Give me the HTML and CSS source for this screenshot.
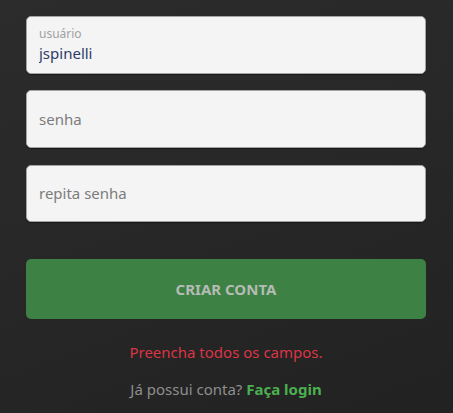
FILE: index.html
```html
<!DOCTYPE html>
<html lang="pt-BR">
<head>
<meta charset="utf-8">
<link rel="stylesheet" href="styles.css">
</head>
<body>
<main class="page">
  <form class="form">
    <div class="field filled">
      <label class="float-label" for="user">usuário</label>
      <input id="user" class="input" type="text" value="jspinelli">
    </div>
    <div class="field">
      <input class="input" type="password" placeholder="senha">
    </div>
    <div class="field">
      <input class="input" type="password" placeholder="repita senha">
    </div>
    <button type="button" class="btn">CRIAR CONTA</button>
    <p class="error">Preencha todos os campos.</p>
    <p class="switch">Já possui conta? <a class="link" href="#">Faça login</a></p>
  </form>
</main>
</body>
</html>
```
FILE: styles.css
```css
* { box-sizing: border-box; }
html, body { margin: 0; height: 100%; }
body {
  background: linear-gradient(160deg, #2c2c2c 0%, #262626 60%, #222 100%);
  font-family: "Noto Sans", "Open Sans", sans-serif;
}
.page { padding: 16px 27px 0 26px; }
.form {
  width: 400px;
  display: flex;
  flex-direction: column;
}
.field {
  height: 57.5px;
  background: #f4f4f4;
  border: 1px solid #a4a4a4;
  border-radius: 5px;
  box-shadow: 0 1px 1px rgba(0,0,0,0.4);
  display: flex;
  flex-direction: column;
  justify-content: center;
  padding: 0 12px;
  margin-bottom: 16.75px;
}
.field.filled { justify-content: flex-start; padding-top: 9px; }
.float-label {
  font-size: 12px;
  line-height: 16px;
  color: #a0a0a0;
}
.input {
  border: 0;
  background: transparent;
  outline: none;
  padding: 0;
  font-family: inherit;
  font-size: 15px;
  line-height: 22px;
  color: #2b3d6b;
  width: 100%;
}
.input::placeholder { color: #7c7c7c; }
.btn {
  margin-top: 20.25px;
  height: 60px;
  border: 0;
  border-radius: 5px;
  background: #3d8145;
  color: #b4bcb4;
  font-family: inherit;
  font-weight: 700;
  font-size: 15px;
}
.error {
  margin: 23px 0 0;
  text-align: center;
  color: #dc3545;
  font-size: 15px;
  line-height: 20px;
}
.switch {
  margin: 17px 0 0;
  text-align: center;
  color: #8e8e8e;
  font-size: 15px;
  line-height: 20px;
}
.link { color: #4caf50; font-weight: 700; text-decoration: none; }
```
